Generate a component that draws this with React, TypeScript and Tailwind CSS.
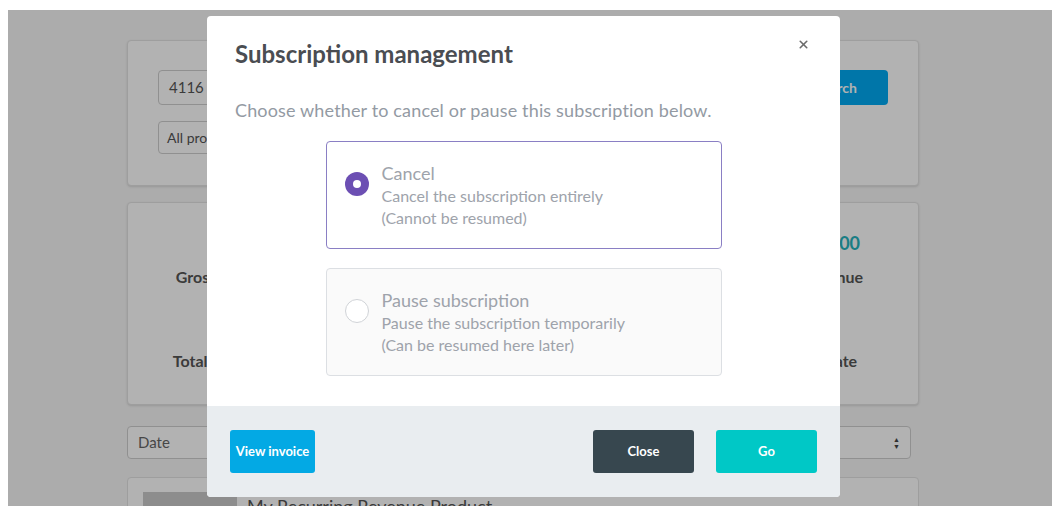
import { X } from "lucide-react";

const stats = [
  { value: "3", label: "Gross revenue" },
  { value: "£0.00", label: "Refunds" },
  { value: "£0.00", label: "Discounts" },
  { value: "£1,250.00", label: "Net revenue" },
  { value: "3", label: "Total payments" },
  { value: "0", label: "Failed" },
  { value: "1", label: "Paused" },
  { value: "0%", label: "Churn rate" },
];

function Option({
  title,
  line1,
  line2,
  selected,
}: {
  title: string;
  line1: string;
  line2: string;
  selected?: boolean;
}) {
  return (
    <div
      className={
        "flex h-[108px] items-center rounded-[4px] border px-[18px] " +
        (selected ? "border-[#8a7fc4] bg-white" : "border-[#dcdfe3] bg-[#fafafa]")
      }
    >
      <div className="flex items-start gap-[13px]">
        {selected ? (
          <div className="mt-[11px] flex h-[24px] w-[24px] shrink-0 items-center justify-center rounded-full bg-[#6c4fb3]">
            <div className="h-[8px] w-[8px] rounded-full bg-white" />
          </div>
        ) : (
          <div className="mt-[11px] h-[24px] w-[24px] shrink-0 rounded-full border border-[#d0d3d7] bg-white" />
        )}
        <div className="text-[#9ea3ab]">
          <div className="text-[18px] leading-[24px]">{title}</div>
          <div className="text-[16px] leading-[22px]">{line1}</div>
          <div className="text-[16px] leading-[22px]">{line2}</div>
        </div>
      </div>
    </div>
  );
}

export default function App() {
  return (
    <div className="h-[526px] w-[1064px] bg-white pl-[8px] pt-[10px] font-['Lato',sans-serif]">
      <div className="relative h-[496px] w-[1044px] overflow-hidden bg-[#f7f7f7]">
        {/* page behind the dialog */}
        <div className="ml-[119px] flex w-[792px] flex-col pt-[30px]">
          <div className="h-[146px] rounded-[4px] border border-[#e2e2e2] bg-white px-[30px] pt-[29px] shadow-sm">
            <div className="flex justify-between">
              <div className="flex h-[35px] w-[420px] items-center rounded-[4px] border border-[#cfcfcf] px-[10px] text-[15px] text-[#555]">
                4116 2390 8812 0045
              </div>
              <div className="flex h-[35px] w-[104px] items-center justify-center rounded-[4px] bg-[#00aaf2] text-[14px] font-bold text-white">
                Search
              </div>
            </div>
            <div className="mt-[16px] flex h-[33px] w-[260px] items-center rounded-[4px] border border-[#cfcfcf] px-[8px] text-[14px] text-[#555]">
              All products
            </div>
          </div>

          <div className="mt-[16px] grid h-[203px] grid-cols-4 content-start rounded-[4px] border border-[#e2e2e2] bg-white pt-[27px] text-center shadow-sm">
            {stats.map((s) => (
              <div key={s.label} className="flex h-[84px] flex-col items-center">
                <div className="text-[18px] leading-[26px] font-bold text-[#26b3bd]">{s.value}</div>
                <div className="mt-[10px] text-[16px] leading-[22px] font-bold text-[#555]">{s.label}</div>
              </div>
            ))}
          </div>

          <div className="mt-[21px] flex h-[33px] w-[784px] items-center justify-between rounded-[4px] border border-[#cfcfcf] bg-white px-[10px] text-[15px] text-[#666]">
            <span>Date</span>
            <span className="flex flex-col text-[7px] leading-[7px] text-[#444]">
              <span>▲</span>
              <span>▼</span>
            </span>
          </div>

          <div className="mt-[18px] flex h-[80px] items-start gap-[10px] rounded-[4px] border border-[#e2e2e2] bg-white px-[15px] pt-[14px]">
            <div className="h-[60px] w-[94px] bg-[#cbcbcb]" />
            <div className="pt-[1px] text-[18px] leading-[26px] text-[#555]">My Recurring Revenue Product</div>
          </div>
        </div>

        {/* dim layer */}
        <div className="absolute inset-0 bg-black/30" />

        {/* dialog */}
        <div className="absolute left-[199px] top-[6px] flex h-[481px] w-[633px] flex-col overflow-hidden rounded-[4px] bg-white">
          <div className="relative flex-1 px-[28px]">
            <h2 className="pt-[24px] text-[24px] leading-[28px] font-bold text-[#4a4d52]">Subscription management</h2>
            <button className="absolute right-[30px] top-[22px] text-[#6b6b6b]">
              <X size={13} strokeWidth={3} />
            </button>
            <p className="mt-[30px] text-[18px] leading-[24px] tracking-[0.15px] text-[#939aa3]">
              Choose whether to cancel or pause this subscription below.
            </p>
            <div className="mx-auto mt-[19px] flex w-[396px] flex-col gap-[19px]">
              <Option
                selected
                title="Cancel"
                line1="Cancel the subscription entirely"
                line2="(Cannot be resumed)"
              />
              <Option
                title="Pause subscription"
                line1="Pause the subscription temporarily"
                line2="(Can be resumed here later)"
              />
            </div>
          </div>
          <div className="flex h-[91px] items-center justify-between bg-[#e9edf0] px-[23px]">
            <button className="h-[43px] w-[85px] rounded-[3px] bg-[#03a9e4] text-[13px] font-bold text-white">
              View invoice
            </button>
            <div className="flex gap-[22px]">
              <button className="h-[43px] w-[101px] rounded-[3px] bg-[#37474f] text-[13px] font-bold text-white">
                Close
              </button>
              <button className="h-[43px] w-[101px] rounded-[3px] bg-[#00c8c6] text-[13px] font-bold text-white">
                Go
              </button>
            </div>
          </div>
        </div>
      </div>
    </div>
  );
}
